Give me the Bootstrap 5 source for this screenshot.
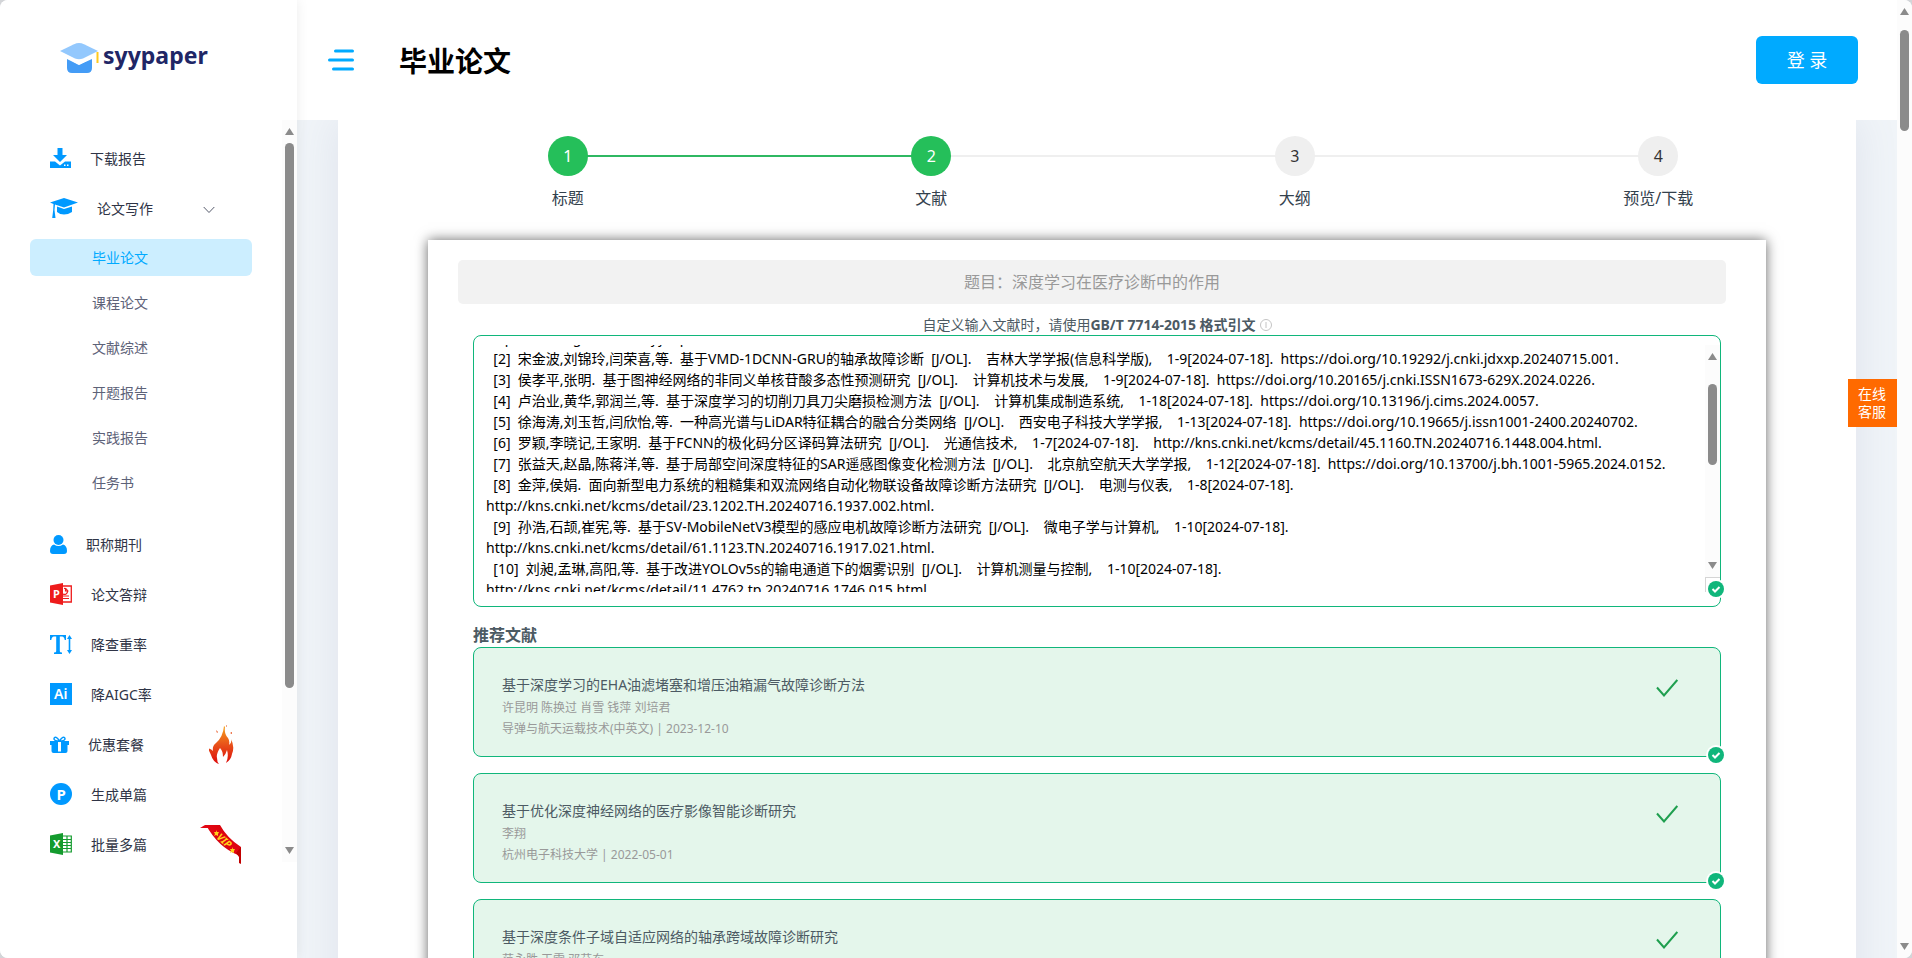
<!DOCTYPE html>
<html lang="zh-CN">
<head>
<meta charset="utf-8">
<meta name="viewport" content="width=device-width, initial-scale=1">
<title>毕业论文 - syypaper</title>
<link href="https://cdn.jsdelivr.net/npm/bootstrap@5.3.0/dist/css/bootstrap.min.css" rel="stylesheet">
<style>
:root{--brand:#00aaff;--ok:#10b67b;--step:#25bf5a;--face:"Noto Sans","Noto Sans CJK SC",sans-serif}
html{background:#d3d5d8}
body{font-family:var(--face);font-size:14px;line-height:21px;color:#4c5a63;background:#fff;border-radius:8px}
a{text-decoration:none;color:inherit}
.side{width:297px;background:#fff;box-shadow:0 0 12px rgba(0,0,0,.08);z-index:3}
.brand{height:120px;padding:0 0 4px 60px;gap:4px}
.brand-name{font:700 23px/28px "Noto Sans",sans-serif;color:#202666;padding-bottom:6px}
.side-body{height:742px}
.menu{padding:13px 0 0 30px}
.menu-item{height:50px;padding:0 40px 0 20px;gap:19px;color:#2f3446}
.menu-item .slot{width:42px;margin-left:auto;text-align:center}
.menu-item .slot.fold{padding-right:24px}
.sub{padding:6px 30px 10px 0}
.sub a{display:block;height:37px;line-height:37px;margin-bottom:8px;padding-left:62px;border-radius:6px;color:#5d6278;white-space:nowrap}
.sub a.on{background:#cceeff;color:var(--brand)}
.rail{width:15px;background:#fcfcfc;padding:8px 0;flex:none}
.rail i{display:block;width:9px;border-radius:5px;background:#8b8b8b}
.top{height:120px;padding:0 39px 0 31px;background:#fff;flex:none}
.top h1{font-size:28px;line-height:36px;font-weight:700;color:#000;padding:2px 0 0 45px}
.login{width:102px;height:48px;font-size:18px;background:var(--brand);color:#fff;border:0;border-radius:6px}
.stage{background:#f0f4f8;padding:0 41px}
.sheet{background:#fff;box-shadow:0 0 40px rgba(120,130,170,.14)}
.steps{padding:16px 16px 0 48px}
.steps li{flex:1 1 0;text-align:center;position:relative;font-size:16px;line-height:24px;color:#33414d}
.steps b{display:block;width:40px;height:40px;line-height:40px;margin:0 auto 10px;border-radius:50%;background:#efefef;font-weight:400;color:#333;position:relative;z-index:1}
.steps .done b{background:var(--step);color:#fff}
.steps li+li::before{content:"";position:absolute;left:-50%;right:50%;top:19px;height:2px;background:#efefef}
.steps li.done+li.done::before{background:#2fb862}
.paper{margin:30px 90px 0;padding:20px 45px;background:#fff;box-shadow:0 0 12px rgba(0,0,0,.6)}
.topic{height:44px;line-height:44px;margin:0 -5px 0 -15px;border-radius:5px;background:#f2f2f2;color:#999;font-size:16px;text-align:center}
.hint{padding:10px 0 0;height:31px}
.cite{border:1px solid var(--ok);border-radius:8px;padding:9px 0 14px 12px;height:272px}
.cite textarea{border:0;padding:0;resize:none;overflow:hidden;white-space:pre;color:#000;font-family:var(--face);font-size:14px;line-height:21px;outline:0}
.cite .rail{height:232px}
.grip{width:15px;height:15px;border:solid #d5d5d5;border-width:1px 0 0 1px}
.tick{position:absolute;right:-5px;bottom:-8px;width:18px;height:18px}
.cite .tick{bottom:8px}
.ref-head{font-size:16px;line-height:24px;font-weight:600;margin:16px 0 0}
.ref{height:110px;border:1px solid var(--ok);border-radius:8px;background:#e4f6eb;padding:25px 42px 0 28px;margin-bottom:16px}
.ref h3{font-size:14px;line-height:24px;font-weight:400;margin:0;color:#4c5a63}
.ref p{font-size:12px;line-height:21px;margin:0;color:#999}
.ref .pick{margin-top:6px}
.help{position:absolute;right:15px;top:379px;width:49px;height:48px;padding:6px 10px;line-height:18px;background:#ff6a00;color:#fff;z-index:4}
</style>
</head>
<body class="vh-100 d-flex overflow-hidden position-relative">

<aside class="side d-flex flex-column flex-shrink-0">
  <a class="brand d-flex align-items-center" href="#">
    <svg width="39" height="30" viewBox="0 0 39 30"><path fill="#449cf6" d="M7 15l12 7 13-7v10q0 5-5 5H12q-5 0-5-5z"/><path fill="#93c8fd" d="M0 8L14 1.200Q19-1 24 1.200L38 8 23 15.500Q19 17 15 15.500z"/><path fill="#fff" d="M7 16l10 5q2 1 4 0l11-5v-2l-11 5q-2 .6-4 0L7 14z"/><path stroke="#ffc91c" stroke-width="2" d="M37.500 9v11"/></svg>
    <span class="brand-name">syypaper</span>
  </a>
  <div class="side-body d-flex">
    <nav class="menu flex-grow-1">
      <a class="menu-item d-flex align-items-center" href="#">
        <svg width="21" height="20" viewBox="0 0 21 20" fill="#0099ff"><path d="M7.500 0h5v7h4.500l-7 7-7-7h4.500z"/><path d="M0 13.500h5l5 4 5-4h6V20H0z"/><path fill="#fff" d="M14 16.500h1.500V18H14zM17 16.500h1.500V18H17z"/></svg>
        <span>下载报告</span>
      </a>
      <a class="menu-item d-flex align-items-center" href="#">
        <svg width="28" height="20" viewBox="0 0 28 20" fill="#0099ff"><path d="M14 0l14 4.500L14 9.500 5 6.400 4.500 12 5.500 20H2.200L3.200 12l.3-6L0 4.500z"/><path d="M7 8.500l7 2.500 8-2.500v5.500Q18 16.500 14 16.500T7 14z"/></svg>
        <span>论文写作</span>
        <span class="slot fold"><svg width="12" height="8" viewBox="0 0 12 8" fill="none" stroke="#555a6b"><path d="M.7 1L6 6.500 11.300 1"/></svg></span>
      </a>
      <ul class="sub list-unstyled m-0">
        <li><a class="on" href="#">毕业论文</a></li>
        <li><a href="#">课程论文</a></li>
        <li><a href="#">文献综述</a></li>
        <li><a href="#">开题报告</a></li>
        <li><a href="#">实践报告</a></li>
        <li><a href="#">任务书</a></li>
      </ul>
      <a class="menu-item d-flex align-items-center" href="#">
        <svg width="17" height="19" viewBox="0 0 17 19" fill="#0099ff"><circle cx="8.500" cy="5" r="5"/><path d="M4 9.500q4.500 3 9 0 4 1 4 6.500 0 3-3 3H3q-3 0-3-3 0-5.500 4-6.500z"/></svg>
        <span>职称期刊</span>
      </a>
      <a class="menu-item d-flex align-items-center" href="#">
        <svg width="22" height="22" viewBox="0 0 22 22"><path fill="none" stroke="#ee1c1c" stroke-width="1.300" d="M12 3h9.300v16H12"/><path fill="none" stroke="#ee1c1c" d="M13 13h6M13 15.500h6"/><path fill="#ee1c1c" d="M0 2.500L13 0v22L0 19.500z"/><path fill="none" stroke="#ee1c1c" stroke-width="1.200" d="M14 5.500a3 3 0 1 1-1 5.500M15.500 5v3h3"/><text x="3" y="15" font-family="Noto Sans" font-weight="700" font-size="11" fill="#fff">P</text></svg>
        <span>论文答辩</span>
      </a>
      <a class="menu-item d-flex align-items-center" href="#">
        <svg width="22" height="19" viewBox="0 0 22 19" fill="#0099ff"><path d="M0 0h16v5h-1.300Q14.300 1.500 12 1.500H9.800v14.700q0 1.300 2.200 1.300V19H4v-1.500q2.200 0 2.200-1.300V1.500H4Q1.700 1.500 1.300 5H0z"/><path d="M19.500 0L22 4h-1.700v11H22l-2.500 4-2.500-4h1.700V4H17z"/></svg>
        <span>降查重率</span>
      </a>
      <a class="menu-item d-flex align-items-center" href="#">
        <svg width="22" height="22" viewBox="0 0 22 22"><path fill="#0099ff" d="M0 0h22v22H0z"/><text x="4" y="16" font-family="Noto Sans" font-weight="600" font-size="14" fill="#fff">Ai</text></svg>
        <span>降AIGC率</span>
      </a>
      <a class="menu-item d-flex align-items-center" href="#">
        <svg width="19" height="17" viewBox="0 0 19 17" fill="#0099ff"><path d="M0 5h19v4H0z"/><path d="M1.500 9h16v6q0 2-2 2h-12q-2 0-2-2z"/><path fill="#fff" d="M8 6h3v9.500H8z"/><path fill="none" stroke="#0099ff" stroke-width="1.500" d="M9.500 5Q3.500 5 4 2.500 5.500-1 9.500 5 13.500-1 15 2.500 15.500 5 9.500 5z"/></svg>
        <span>优惠套餐</span>
        <span class="slot"><svg width="25" height="39" viewBox="0 0 25 39"><defs><linearGradient id="fire" x1="0" y1="0" x2="0" y2="1"><stop offset="0" stop-color="#f6a21c"/><stop offset=".5" stop-color="#e8501a"/><stop offset="1" stop-color="#dd0a0a"/></linearGradient></defs><path fill="url(#fire)" d="M16 2q-1 7 3 11 2 3 1 7 3-2 2-6 4 8 1 15-1 6-6 9 3-6 1-13-1 4-4 7 0-6-3-9-4 6-3 10 0 4 2 6-6-2-8-9-2-5-4-7 4 1 6 3-1-5 3-8 7-6 8-17z"/><path fill="#e8501a" d="M7 5l2 2-1 1zM21 8l2-1v2zM17 0l1 1-1 1z"/></svg></span>
      </a>
      <a class="menu-item d-flex align-items-center" href="#">
        <svg width="22" height="22" viewBox="0 0 22 22"><circle cx="11" cy="11" r="11" fill="#0099ff"/><text x="6.500" y="16.500" font-family="Noto Sans" font-weight="700" font-size="15" fill="#fff">P</text></svg>
        <span>生成单篇</span>
      </a>
      <a class="menu-item d-flex align-items-center" href="#">
        <svg width="22" height="22" viewBox="0 0 22 22"><path fill="none" stroke="#149b2e" stroke-width="1.200" d="M12 3h9.300v16H12M13 6.500h8M13 9.500h8M13 12.500h8M13 15.500h8M17 3v16"/><path fill="#149b2e" d="M0 2.500L13 0v22L0 19.500z"/><text x="3" y="15" font-family="Noto Sans" font-weight="700" font-size="11" fill="#fff">X</text></svg>
        <span>批量多篇</span>
        <span class="slot"><svg width="42" height="39" viewBox="0 0 42 39"><defs><linearGradient id="band" x1="0" y1="1" x2="1" y2="0"><stop offset="0" stop-color="#8d0000"/><stop offset=".5" stop-color="#e30613"/><stop offset="1" stop-color="#c00"/></linearGradient></defs><path fill="#e30613" d="M0 3L5 0h10l-6 3z"/><path fill="url(#band)" d="M6 0h14q7 13 21 22v10q-1-2-3-2Q18 22 6 0z"/><path fill="#c10000" d="M41 22v17l-2-1v-6l-3-4z"/><text transform="translate(16 13) rotate(42)" font-family="Noto Sans" font-weight="700" font-style="italic" font-size="10" fill="#ffd21a">VIP</text><path fill="#ffd21a" d="M16 5l1 2 2 0-1 2 0 2-2-1-2 1 1-2-1-2h2zM32 22l1 2 2 0-1 2 0 2-2-1-2 1 1-2-1-2h2z"/></svg></span>
      </a>
    </nav>
    <div class="rail d-flex flex-column align-items-center">
      <svg width="9" height="7"><path fill="#8b8b8b" d="M4.500 0L9 7H0z"/></svg>
      <i class="mt-2" style="height:545px"></i>
      <svg class="mt-auto" width="9" height="7"><path fill="#8b8b8b" d="M4.500 7L9 0H0z"/></svg>
    </div>
  </div>
</aside>

<main class="flex-grow-1 d-flex flex-column overflow-hidden">
  <header class="top d-flex align-items-center">
    <svg width="26" height="22" viewBox="0 0 26 22" stroke="#00aaff" stroke-width="3" stroke-linecap="round"><path d="M7.500 2h17M1.500 11h23M5.500 20h19"/></svg>
    <h1 class="m-0">毕业论文</h1>
    <button type="button" class="login ms-auto p-0">登 录</button>
  </header>
  <div class="stage flex-grow-1 overflow-hidden">
    <div class="sheet d-flow-root pb-5">
      <ol class="steps list-unstyled d-flex m-0">
        <li class="done"><b>1</b>标题</li>
        <li class="done"><b>2</b>文献</li>
        <li><b>3</b>大纲</li>
        <li><b>4</b>预览/下载</li>
      </ol>
      <section class="paper">
        <div class="topic">题目：深度学习在医疗诊断中的作用</div>
        <label class="hint d-flex justify-content-center align-items-center" for="cite">自定义输入文献时，请使用<strong>GB/T 7714-2015 格式引文</strong>
          <svg class="ms-1" width="12" height="12" viewBox="0 0 12 12" fill="none" stroke="#c4c4c4"><circle cx="6" cy="6" r="5.500"/><path d="M6 3v6"/></svg></label>
        <div class="cite d-flex position-relative">
<textarea id="cite" class="flex-grow-1" spellcheck="false">
https://doi.org/10.13190/j.jbupt.2024-001.
  [2]  宋金波,刘锦玲,闫荣喜,等.  基于VMD-1DCNN-GRU的轴承故障诊断  [J/OL].    吉林大学学报(信息科学版),    1-9[2024-07-18].  https://doi.org/10.19292/j.cnki.jdxxp.20240715.001.
  [3]  侯孝平,张明.  基于图神经网络的非同义单核苷酸多态性预测研究  [J/OL].    计算机技术与发展,    1-9[2024-07-18].  https://doi.org/10.20165/j.cnki.ISSN1673-629X.2024.0226.
  [4]  卢治业,黄华,郭润兰,等.  基于深度学习的切削刀具刀尖磨损检测方法  [J/OL].    计算机集成制造系统,    1-18[2024-07-18].  https://doi.org/10.13196/j.cims.2024.0057.
  [5]  徐海涛,刘玉哲,闫欣怡,等.  一种高光谱与LiDAR特征耦合的融合分类网络  [J/OL].    西安电子科技大学学报,    1-13[2024-07-18].  https://doi.org/10.19665/j.issn1001-2400.20240702.
  [6]  罗颖,李晓记,王家明.  基于FCNN的极化码分区译码算法研究  [J/OL].    光通信技术,    1-7[2024-07-18].    http://kns.cnki.net/kcms/detail/45.1160.TN.20240716.1448.004.html.
  [7]  张益天,赵晶,陈蒋洋,等.  基于局部空间深度特征的SAR遥感图像变化检测方法  [J/OL].    北京航空航天大学学报,    1-12[2024-07-18].  https://doi.org/10.13700/j.bh.1001-5965.2024.0152.
  [8]  金萍,侯娟.  面向新型电力系统的粗糙集和双流网络自动化物联设备故障诊断方法研究  [J/OL].    电测与仪表,    1-8[2024-07-18].
http://kns.cnki.net/kcms/detail/23.1202.TH.20240716.1937.002.html.
  [9]  孙浩,石颉,崔宪,等.  基于SV-MobileNetV3模型的感应电机故障诊断方法研究  [J/OL].    微电子学与计算机,    1-10[2024-07-18].
http://kns.cnki.net/kcms/detail/61.1123.TN.20240716.1917.021.html.
  [10]  刘昶,孟琳,高阳,等.  基于改进YOLOv5s的输电通道下的烟雾识别  [J/OL].    计算机测量与控制,    1-10[2024-07-18].
http://kns.cnki.net/kcms/detail/11.4762.tp.20240716.1746.015.html.
</textarea>
          <div>
            <div class="rail d-flex flex-column align-items-center">
              <svg width="9" height="7"><path fill="#8b8b8b" d="M4.500 0L9 7H0z"/></svg>
              <i style="height:81px;margin-top:24px"></i>
              <svg class="mt-auto" width="9" height="7"><path fill="#8b8b8b" d="M4.500 7L9 0H0z"/></svg>
            </div>
            <div class="grip"></div>
          </div>
          <svg class="tick overflow-visible" viewBox="0 0 18 18"><circle cx="9" cy="9" r="10" fill="#fff"/><circle cx="9" cy="9" r="8" fill="#10b67b"/><path fill="none" stroke="#fff" stroke-width="2" d="M5.500 9l2.500 2.500L12.500 7"/></svg>
        </div>
        <h2 class="ref-head">推荐文献</h2>
        <article class="ref d-flex position-relative">
          <div class="flex-grow-1"><h3>基于深度学习的EHA油滤堵塞和增压油箱漏气故障诊断方法</h3><p>许昆明 陈换过 肖雪 钱萍 刘培君</p><p>导弹与航天运载技术(中英文) | 2023-12-10</p></div>
          <svg class="pick" width="22" height="18" viewBox="0 0 22 18" fill="none" stroke="#1f9f4f" stroke-width="2"><path d="M1 8.500L8 16.500 21.300 1"/></svg>
          <svg class="tick overflow-visible" viewBox="0 0 18 18"><circle cx="9" cy="9" r="10" fill="#fff"/><circle cx="9" cy="9" r="8" fill="#10b67b"/><path fill="none" stroke="#fff" stroke-width="2" d="M5.500 9l2.500 2.500L12.500 7"/></svg>
        </article>
        <article class="ref d-flex position-relative">
          <div class="flex-grow-1"><h3>基于优化深度神经网络的医疗影像智能诊断研究</h3><p>李翔</p><p>杭州电子科技大学 | 2022-05-01</p></div>
          <svg class="pick" width="22" height="18" viewBox="0 0 22 18" fill="none" stroke="#1f9f4f" stroke-width="2"><path d="M1 8.500L8 16.500 21.300 1"/></svg>
          <svg class="tick overflow-visible" viewBox="0 0 18 18"><circle cx="9" cy="9" r="10" fill="#fff"/><circle cx="9" cy="9" r="8" fill="#10b67b"/><path fill="none" stroke="#fff" stroke-width="2" d="M5.500 9l2.500 2.500L12.500 7"/></svg>
        </article>
        <article class="ref d-flex position-relative">
          <div class="flex-grow-1"><h3>基于深度条件子域自适应网络的轴承跨域故障诊断研究</h3><p>范永胜 王雷 邓艾东</p></div>
          <svg class="pick" width="22" height="18" viewBox="0 0 22 18" fill="none" stroke="#1f9f4f" stroke-width="2"><path d="M1 8.500L8 16.500 21.300 1"/></svg>
        </article>
      </section>
    </div>
  </div>
</main>

<div class="rail d-flex flex-column align-items-center">
  <svg width="9" height="7"><path fill="#8b8b8b" d="M4.500 0L9 7H0z"/></svg>
  <i style="height:101px;margin-top:15px"></i>
  <svg class="mt-auto" width="9" height="7"><path fill="#8b8b8b" d="M4.500 7L9 0H0z"/></svg>
</div>
<a class="help" href="#">在线<br>客服</a>

<script src="https://cdn.jsdelivr.net/npm/bootstrap@5.3.0/dist/js/bootstrap.bundle.min.js"></script>
<script>
// The list opens with the first entry almost scrolled out.
document.getElementById('cite').scrollTop = 18;
</script>
</body>
</html>
